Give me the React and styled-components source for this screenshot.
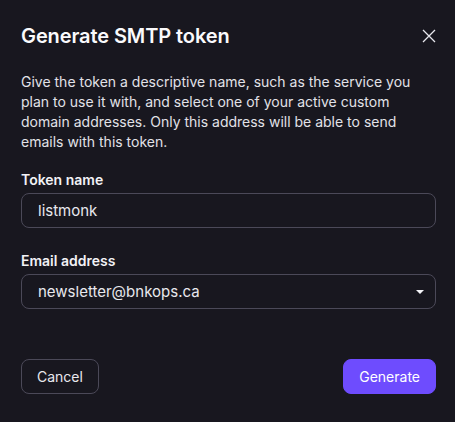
import React from 'react'
import styled, { createGlobalStyle } from 'styled-components'

const Global = createGlobalStyle`
  html, body {
    margin: 0;
    padding: 0;
    background: #18171f;
  }
  * { box-sizing: border-box; }
`

function App() {
  return (
    <>
      <Global />
      <Dialog>
        <Header>
          <Title>Generate SMTP token</Title>
          <CloseButton aria-label="Close">
            <svg width="14" height="14" viewBox="0 0 14 14">
              <path d="M1 1L13 13M13 1L1 13" stroke="#e8e8ee" strokeWidth="1.3" />
            </svg>
          </CloseButton>
        </Header>

        <Description>
          Give the token a descriptive name, such as the service you plan to use it with, and
          select one of your active custom domain addresses. Only this address will be able to
          send emails with this token.
        </Description>

        <Field>
          <Label>Token name</Label>
          <Input defaultValue="listmonk" />
        </Field>

        <Field>
          <Label>Email address</Label>
          <Select>
            <span>newsletter@bnkops.ca</span>
            <Caret />
          </Select>
        </Field>

        <Footer>
          <Button>Cancel</Button>
          <Button primary>Generate</Button>
        </Footer>
      </Dialog>
    </>
  )
}

export default App

const Dialog = styled.div`
  width: 455px;
  height: 422px;
  background: #18171f;
  padding: 22px 19px 0 21px;
  font-family: Inter, "Noto Sans", sans-serif;
  color: #ececf1;
  display: flex;
  flex-direction: column;
`

const Header = styled.div`
  display: flex;
  justify-content: space-between;
  align-items: center;
  height: 28px;
`

const Title = styled.h2`
  margin: 0;
  font-size: 20px;
  font-weight: 600;
  letter-spacing: -0.1px;
  color: #fafafc;
`

const CloseButton = styled.button`
  background: none;
  border: none;
  padding: 0;
  width: 14px;
  height: 14px;
  display: flex;
  cursor: pointer;
`

const Description = styled.p`
  margin: 22px 0 0;
  font-size: 14px;
  line-height: 20px;
  color: #e2e2e8;
`

const Field = styled.div`
  display: flex;
  flex-direction: column;
  margin-top: 18px;
  & + & { margin-top: 23px; }
`

const Label = styled.label`
  font-size: 14px;
  font-weight: 600;
  color: #f2f2f6;
  line-height: 20px;
  margin-bottom: 3px;
`

const Input = styled.input`
  height: 35px;
  width: 100%;
  border: 1px solid #4b4958;
  border-radius: 8px;
  background: transparent;
  color: #e8e8ee;
  font-family: inherit;
  font-size: 15px;
  padding: 0 16px;
  outline: none;
`

const Select = styled.div`
  height: 35px;
  border: 1px solid #4b4958;
  border-radius: 8px;
  display: flex;
  align-items: center;
  justify-content: space-between;
  padding: 0 11px 0 16px;
  font-size: 15px;
  color: #e8e8ee;
`

const Caret = styled.span`
  width: 0;
  height: 0;
  border-left: 4px solid transparent;
  border-right: 4px solid transparent;
  border-top: 4px solid #f4f4f8;
`

const Footer = styled.div`
  display: flex;
  justify-content: space-between;
  margin-top: 50px;
`

const Button = styled.button`
  height: 35px;
  padding: 0 15px;
  border-radius: 8px;
  font-family: inherit;
  font-size: 14px;
  cursor: pointer;
  color: ${p => (p.primary ? '#ffffff' : '#e8e8ee')};
  background: ${p => (p.primary ? '#6e4cfe' : 'transparent')};
  border: 1px solid ${p => (p.primary ? '#6e4cfe' : '#4b4958')};
  min-width: ${p => (p.primary ? '92px' : '77px')};
`
